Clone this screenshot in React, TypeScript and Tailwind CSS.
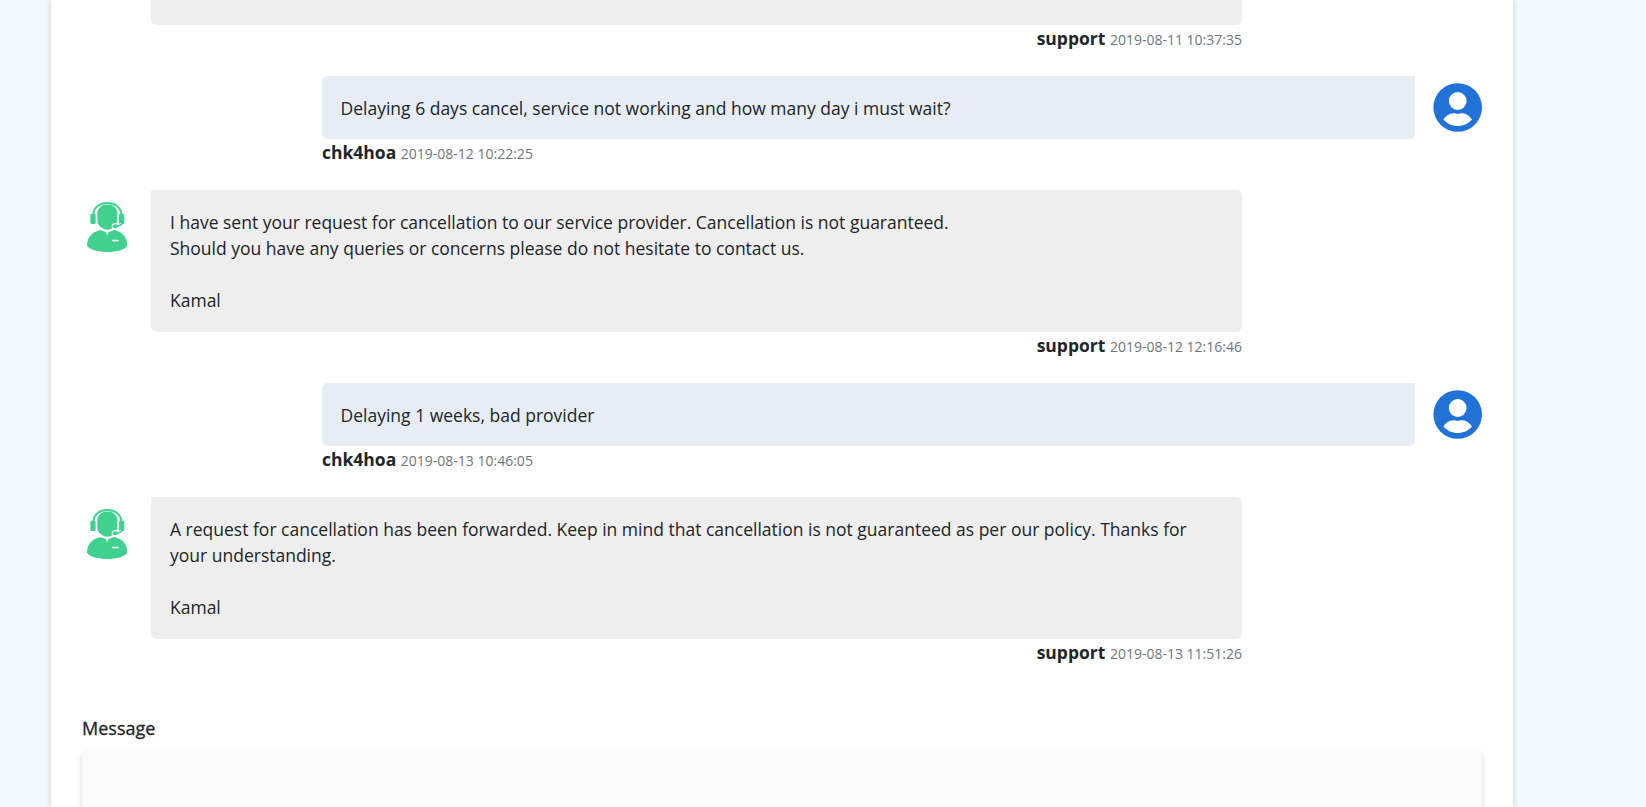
import React from "react";

function AgentIcon() {
  return (
    <svg viewBox="30 15 132 162" className="mt-[10px] ml-[3px] h-[54px] w-[44px] shrink-0" fill="none">
      <path d="M55 60C55 12 139 12 139 60" stroke="#41d18f" strokeWidth="6" />
      <rect x="46" y="56" width="16" height="31" rx="4" fill="#41d18f" />
      <rect x="132" y="56" width="16" height="31" rx="4" fill="#41d18f" />
      <path d="M67 56C67 19 127 19 127 56V78C127 91 111 104 97 104S67 91 67 78Z" fill="#41d18f" />
      <path d="M141 88C136 93 128 93 120 93" stroke="#fff" strokeWidth="12" />
      <ellipse cx="122" cy="94" rx="12" ry="10" fill="#fff" />
      <path d="M141 87C136 93 128 93 120 93" stroke="#41d18f" strokeWidth="4" />
      <ellipse cx="121" cy="94" rx="8" ry="6" fill="#41d18f" />
      <path d="M76 105C52 112 37 124 36 152C52 177 142 177 157 152C156 124 142 112 118 105L101 111L97 121L92 111Z" fill="#41d18f" />
      <path d="M111 136.500H131" stroke="#fff" strokeWidth="4.5" />
    </svg>
  );
}

function UserIcon() {
  return (
    <svg viewBox="0 0 49 49" className="mt-[7px] h-[49px] w-[49px] shrink-0">
      <circle cx="24.7" cy="24.5" r="24.3" fill="#2172d7" />
      <circle cx="24.7" cy="18" r="8.9" fill="#fff" />
      <path d="M10.4 36.6C12.2 33.5 16.200 30.3 20.2 30.3C22.200 30.3 23.200 31 24.7 31S27.200 30.3 29.200 30.3C33.200 30.3 37.200 33.5 39 36.6C35.200 41 30.200 43.1 24.7 43.1S14.200 41 10.4 36.6Z" fill="#fff" />
    </svg>
  );
}

function Meta({ name, time }: { name: string; time: string }) {
  return (
    <div className="h-[26px] leading-[26px] whitespace-nowrap">
      <span className="font-bold">{name}</span>{" "}
      <span className="text-[14px] text-[#6c757d]">{time}</span>
    </div>
  );
}

function SupportMessage({ time, children }: { time: string; children: React.ReactNode }) {
  return (
    <div className="flex h-[193px] shrink-0">
      <div className="w-[69px] shrink-0"><AgentIcon /></div>
      <div className="w-[1091px] text-right">
        <div className="h-[142px] rounded-md rounded-tl-none bg-[#eeeeee] px-[19px] pt-[19px] text-left leading-[26px]">
          {children}
        </div>
        <Meta name="support" time={time} />
      </div>
    </div>
  );
}

function UserMessage({ time, children }: { time: string; children: React.ReactNode }) {
  return (
    <div className="flex h-[114px] shrink-0 justify-end">
      <div className="mr-[18px] w-[1093px]">
        <div className="h-[63px] rounded-md rounded-tr-none bg-[#e6edf5] px-[18.5px] pt-[19px] leading-[26px]">
          {children}
        </div>
        <Meta name="chk4hoa" time={time} />
      </div>
      <UserIcon />
    </div>
  );
}

export default function App() {
  return (
    <div className="h-[807px] overflow-hidden bg-[#f4f9fd] pl-[51px] font-['Open_Sans',sans-serif] text-[17.5px] text-[#212529]">
      <main className="flex h-full w-[1462px] flex-col bg-white pr-[31px] pl-[31px] shadow-[0_0_6px_rgba(0,0,0,0.2)]">
        <div className="h-[76px] shrink-0 pl-[69px]">
          <div className="w-[1091px] text-right">
            <div className="h-[25px] rounded-b-md bg-[#eeeeee]" />
            <Meta name="support" time="2019-08-11 10:37:35" />
          </div>
        </div>
        <UserMessage time="2019-08-12 10:22:25">
          Delaying 6 days cancel, service not working and how many day i must wait?
        </UserMessage>
        <SupportMessage time="2019-08-12 12:16:46">
          I have sent your request for cancellation to our service provider. Cancellation is not guaranteed.
          <br />
          Should you have any queries or concerns please do not hesitate to contact us.
          <br />
          <br />
          Kamal
        </SupportMessage>
        <UserMessage time="2019-08-13 10:46:05">Delaying 1 weeks, bad provider</UserMessage>
        <SupportMessage time="2019-08-13 11:51:26">
          A request for cancellation has been forwarded. Keep in mind that cancellation is not guaranteed as per our policy. Thanks for your understanding.
          <br />
          <br />
          Kamal
        </SupportMessage>
        <label htmlFor="message" className="mt-[25px] h-[36px] shrink-0 text-[18px] leading-[26px] [-webkit-text-stroke:0.3px_#212529]">Message</label>
        <textarea
          id="message"
          className="block h-[140px] w-[1400px] shrink-0 resize-none rounded-md bg-[#fafafa] p-4 shadow-[0_2px_6px_rgba(0,0,0,0.16)] outline-none"
        />
      </main>
    </div>
  );
}
